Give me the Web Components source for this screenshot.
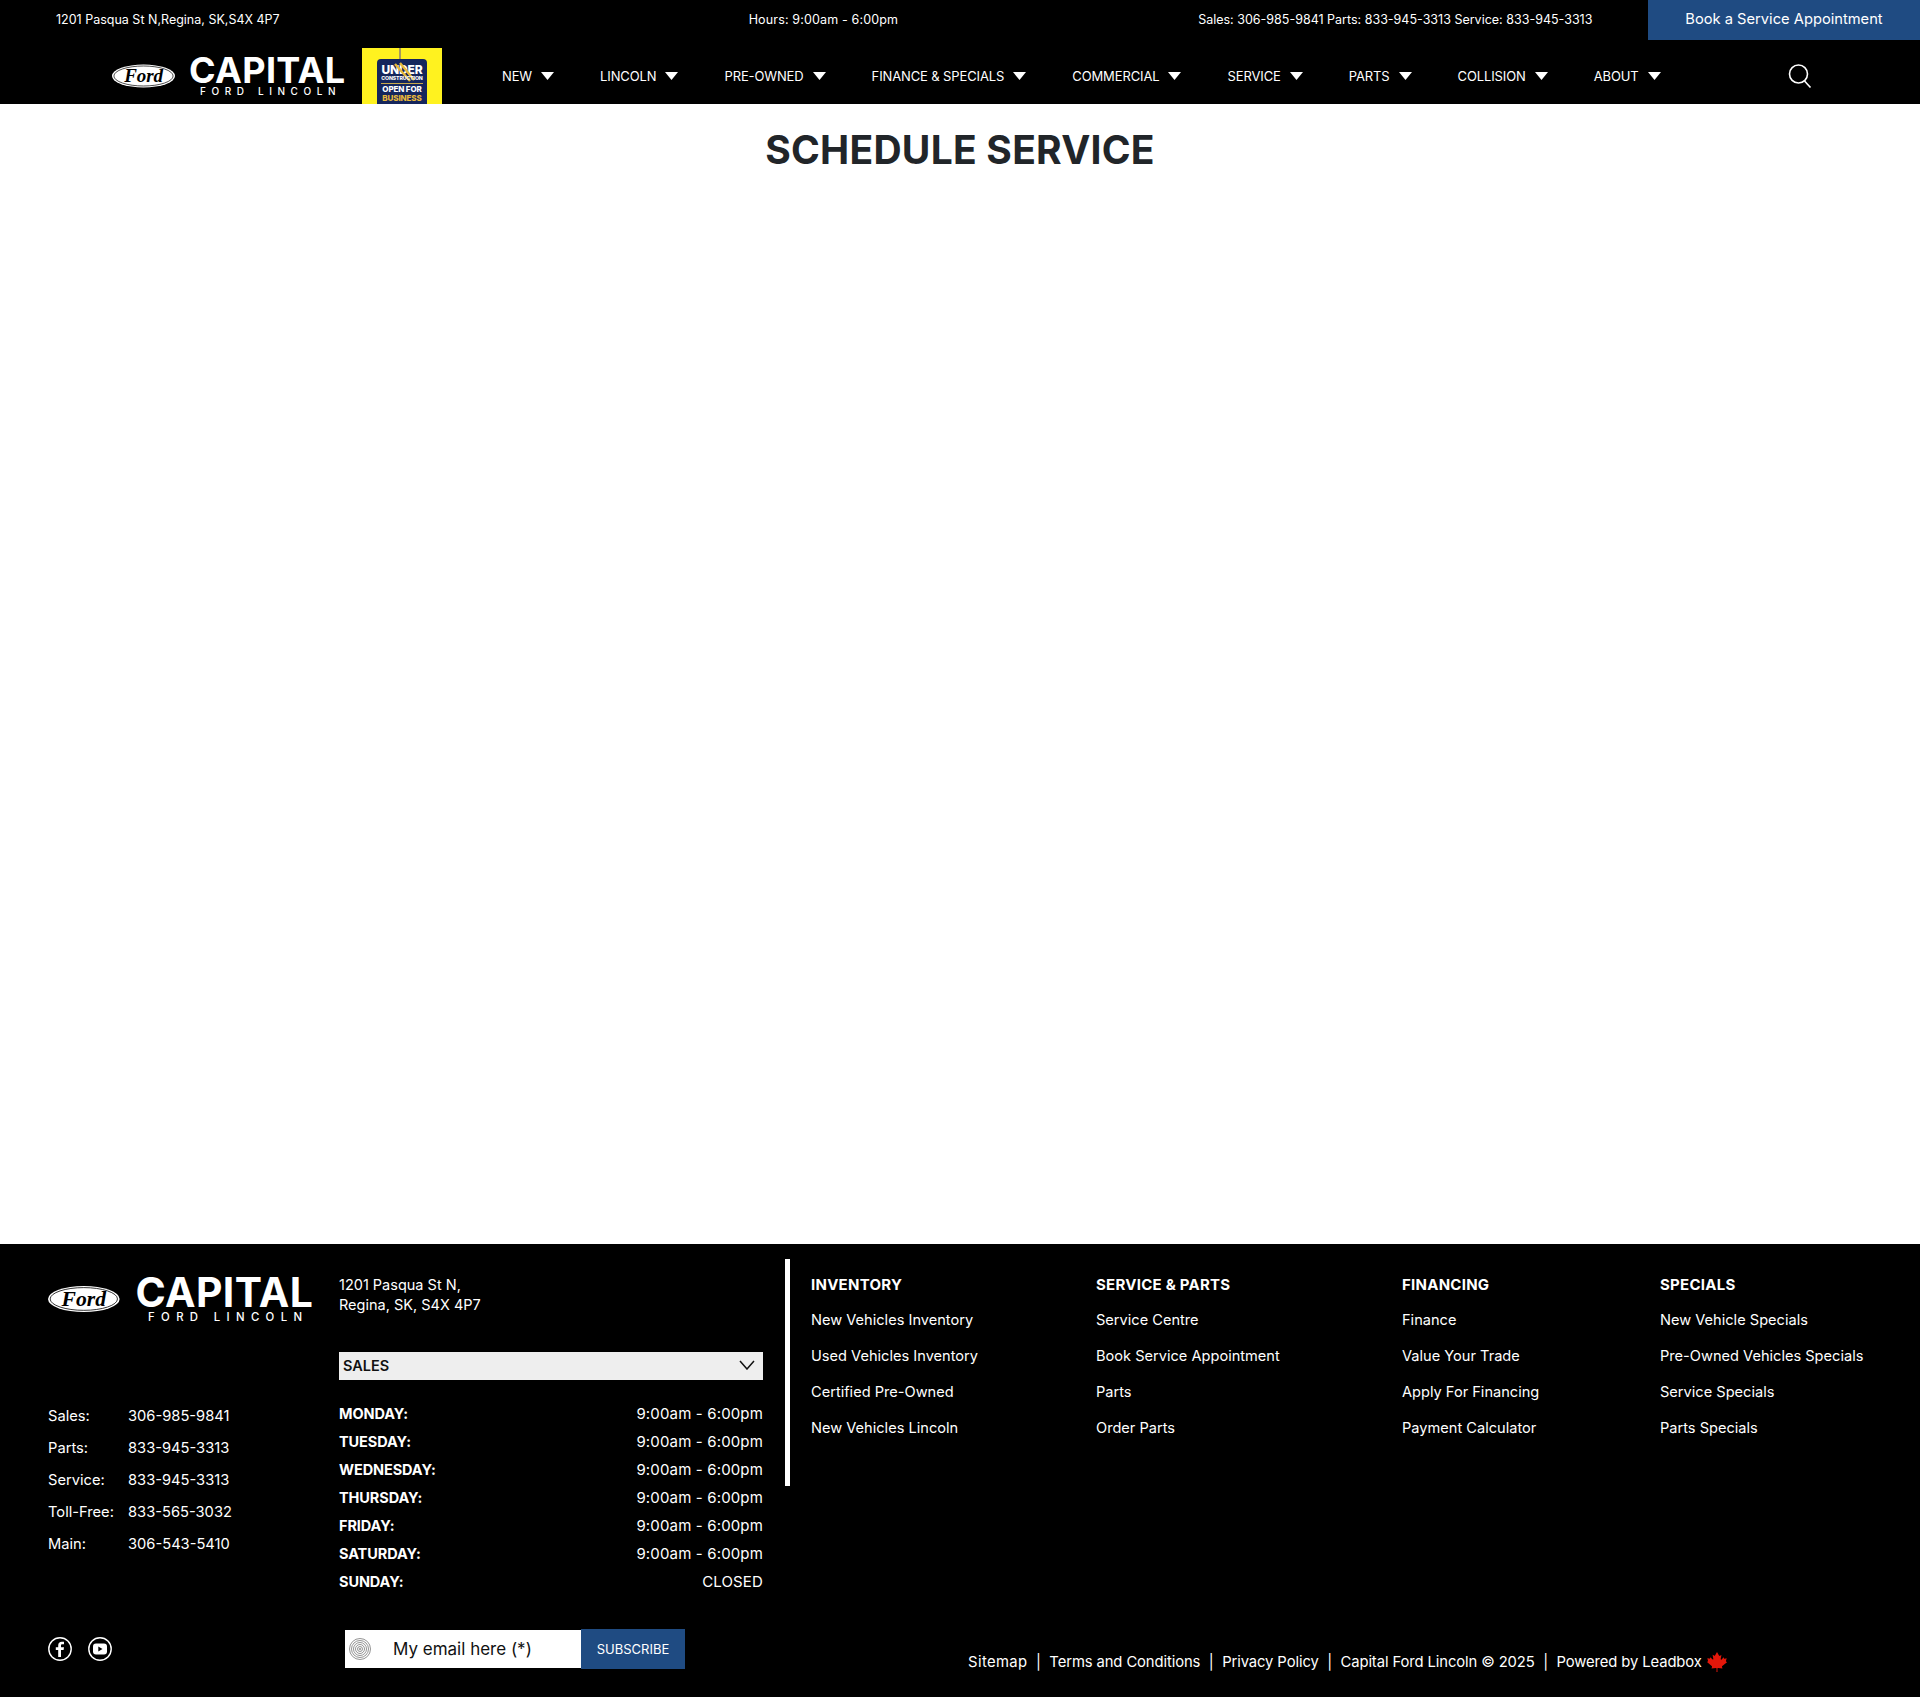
<!DOCTYPE html>
<html lang="en">
<head>
<meta charset="utf-8">
<title>Schedule Service</title>
<style>
    html, body { margin: 0; background: #fff; }
    body { font-family: Inter, "Liberation Sans", sans-serif; color: #fff; }
</style>
</head>
<body>
<top-bar></top-bar>
<main-nav></main-nav>
<page-heading>SCHEDULE SERVICE</page-heading>
<site-footer></site-footer>

<script>
const caret = `<svg width="13" height="8" viewBox="0 0 13 8"><path d="M0 0h13L6.5 8z" fill="#fff"/></svg>`;

class TopBar extends HTMLElement{
    constructor(){
        super();
        this.attachShadow({mode : 'open'});
    }
    connectedCallback(){
        this.shadowRoot.innerHTML = `
        <style>
            :host { display: block; background: #000; color: #fff; font-size: 12.5px; }
            .bar { display: flex; align-items: center; height: 38px; padding: 0 0 2px 56px; }
            .hours { margin-left: 469px; letter-spacing: .15px; }
            .phones { margin-left: 300px; width: 395px; white-space: nowrap; }
            .book { margin: 0 0 -2px auto; align-self: stretch; width: 272px; display: flex; align-items: center;
                    justify-content: center; background: #1f4b82; font-size: 14.7px; padding-bottom: 2px; box-sizing: border-box; }
        </style>
        <div class="bar">
            <span class="addr">1201 Pasqua St N,Regina, SK,S4X 4P7</span>
            <span class="hours">Hours: 9:00am - 6:00pm</span>
            <span class="phones">Sales: 306-985-9841 Parts: 833-945-3313 Service: 833-945-3313</span>
            <span class="book">Book a Service Appointment</span>
        </div>`;
    }
}

class BrandLogo extends HTMLElement{
    constructor(){
        super();
        this.attachShadow({mode : 'open'});
    }
    connectedCallback(){
        // viewBox runs past the 38 unit logo so the text boxes stay inside the svg
        this.shadowRoot.innerHTML = `
        <style>
            :host { display: block; width: var(--logo-width, 234px); flex: none; }
            svg { display: block; width: 100%; height: auto;
                  margin-top: calc(var(--logo-width, 234px) * -10 / 234);
                  margin-bottom: calc(var(--logo-width, 234px) * -4 / 234); }
        </style>
        <svg viewBox="0 -10 234 52" fill="#fff" font-family="Inter, sans-serif">
            <ellipse cx="31.5" cy="19" rx="31.5" ry="11.500"/>
            <ellipse cx="31.5" cy="19" rx="29.6" ry="10" fill="none" stroke="#000" stroke-width=".7"/>
            <text x="31.5" y="25" text-anchor="middle" font-family="Liberation Serif" font-style="italic" font-weight="700" font-size="19" fill="#000">Ford</text>
            <text x="77" y="26" font-size="36" font-weight="700" textLength="156" lengthAdjust="spacing">CAPITAL</text>
            <text x="88" y="38" font-size="10" font-weight="500" textLength="135.500" lengthAdjust="spacing">FORD LINCOLN</text>
        </svg>`;
    }
}

class NavItem extends HTMLElement{
    constructor(){
        super();
        this.attachShadow({mode : 'open'});
    }
    connectedCallback(){
        this.shadowRoot.innerHTML = `
        <style>
            :host { display: flex; align-items: center; gap: 9px; white-space: nowrap; }
        </style>
        <slot></slot>${caret}`;
    }
}

class MainNav extends HTMLElement{
    constructor(){
        super();
        this.attachShadow({mode : 'open'});
        this.items = ["NEW", "LINCOLN", "PRE-OWNED", "FINANCE & SPECIALS", "COMMERCIAL", "SERVICE", "PARTS", "COLLISION", "ABOUT"];
    }
    connectedCallback(){
        this.shadowRoot.innerHTML = `
        <style>
            :host { display: block; background: #000; color: #fff; font-size: 13px; letter-spacing: -0.12px; }
            .nav { display: flex; align-items: center; height: 64px; box-sizing: border-box; padding: 7px 0 0 112px; }
            brand-logo { align-self: flex-start; margin-top: 10px; }
            .badge { flex: none; width: 80px; height: 56px; align-self: flex-end; margin-left: 16px; display: block; }
            .links { display: flex; gap: 46px; margin-left: 60px; }
            .search { margin-left: auto; margin-right: 108px; display: block; }
        </style>
        <div class="nav">
            <brand-logo></brand-logo>
            <svg class="badge" viewBox="0 0 80 56" font-family="Inter, sans-serif" font-weight="800" text-anchor="middle">
                <rect width="80" height="56" fill="#fff21f"/>
                <path d="M38 0v11" stroke="#a89a5a" stroke-width="2"/>
                <rect x="15" y="11" width="50" height="50" rx="4" fill="#15265c"/>
                <text x="40" y="26" font-size="12" fill="#fff">UNDER</text>
                <path d="M33 16l15 17M38 15l14 17" stroke="#e5b93a" stroke-width="2.4"/>
                <text x="40" y="31.5" font-size="5.2" fill="#fff">CONSTRUCTION</text>
                <rect x="19" y="35" width="42" height="1" fill="#c9a94a"/>
                <text x="40" y="44" font-size="8" fill="#fff">OPEN FOR</text>
                <text x="40" y="52.500" font-size="8" fill="#e9b83a">BUSINESS</text>
            </svg>
            <div class="links"></div>
            <svg class="search" width="24" height="24" viewBox="0 0 24 24" fill="none" stroke="#fff" stroke-width="1.6">
                <circle cx="10.500" cy="10" r="9"/><path d="M16.500 17l6 6.500"/>
            </svg>
        </div>`;
        const links = this.shadowRoot.querySelector('.links');
        this.items.forEach(item => {
            const el = document.createElement('nav-item');
            el.textContent = item;
            links.appendChild(el);
        });
    }
}

class PageHeading extends HTMLElement{
    constructor(){
        super();
        this.attachShadow({mode : 'open'});
    }
    connectedCallback(){
        this.shadowRoot.innerHTML = `
        <style>
            :host { display: block; height: 1140px; background: #fff; color: #212529; text-align: center; }
            h1 { margin: 0; padding-top: 23px; font-size: 39px; line-height: 46px; font-weight: 700; letter-spacing: .25px; }
        </style>
        <h1><slot></slot></h1>`;
    }
}

class LinkColumn extends HTMLElement{
    constructor(){
        super();
        this.attachShadow({mode : 'open'});
    }
    connectedCallback(){
        const links = this.getAttribute('links').split('|');
        this.shadowRoot.innerHTML = `
        <style>
            :host { display: block; font-size: 14.6px; }
            h4 { margin: 0 0 4px; font-size: 15px; font-weight: 700; line-height: 26px; letter-spacing: .25px; }
            div { line-height: 36px; white-space: nowrap; }
        </style>
        <h4>${this.getAttribute('title')}</h4>
        ${links.map(l => `<div>${l}</div>`).join('')}`;
    }
}

class HoursPanel extends HTMLElement{
    constructor(){
        super();
        this.attachShadow({mode : 'open'});
        this.days = ["MONDAY", "TUESDAY", "WEDNESDAY", "THURSDAY", "FRIDAY", "SATURDAY", "SUNDAY"];
    }
    connectedCallback(){
        this.shadowRoot.innerHTML = `
        <style>
            :host { display: block; font-size: 15px; letter-spacing: .15px; }
            .select { display: flex; align-items: center; justify-content: space-between; height: 28px; box-sizing: border-box; padding: 0 8px 2px 4px;
                      background: #eee; color: #111; font-weight: 600; font-size: 14.5px; letter-spacing: 0; }
            .rows { margin-top: 20px; }
            .row { display: flex; justify-content: space-between; height: 28px; line-height: 28px; }
            b { font-weight: 700; font-size: 14.5px; letter-spacing: -0.1px; }
        </style>
        <div class="select"><span>SALES</span>
            <svg width="16" height="10" viewBox="0 0 16 10" fill="none" stroke="#111" stroke-width="1.5"><path d="M1 1l7 8 7-8"/></svg>
        </div>
        <div class="rows">
            ${this.days.map(d => `<div class="row"><b>${d}:</b><span>${d == "SUNDAY" ? "CLOSED" : "9:00am - 6:00pm"}</span></div>`).join('')}
        </div>`;
    }
}

class SubscribeForm extends HTMLElement{
    constructor(){
        super();
        this.attachShadow({mode : 'open'});
    }
    connectedCallback(){
        this.shadowRoot.innerHTML = `
        <style>
            :host { display: flex; align-items: stretch; height: 40px; margin-left: 6px; width: 340px; }
            .email { display: flex; align-items: center; width: 236px; margin: 1px 0; background: #fff; color: #111; font-size: 17px; }
            svg { margin: 0 22px 0 4px; flex: none; }
            .go { display: flex; align-items: center; justify-content: center; flex: 1; background: #1f4b82; color: #fff; font-size: 13px; }
        </style>
        <div class="email">
            <svg width="22" height="22" viewBox="0 0 22 22" fill="none" stroke="#777" stroke-width=".8">
                <circle cx="11" cy="11" r="10.500"/><circle cx="11" cy="11" r="8.500"/><circle cx="11" cy="11" r="6.500"/>
                <circle cx="11" cy="11" r="4.500"/><circle cx="11" cy="11" r="2.500"/><circle cx="11" cy="11" r=".8"/>
            </svg>
            <span>My email here (*)</span>
        </div>
        <div class="go">SUBSCRIBE</div>`;
    }
}

class SiteFooter extends HTMLElement{
    constructor(){
        super();
        this.attachShadow({mode : 'open'});
        this.phones = [["Sales:", "306-985-9841"], ["Parts:", "833-945-3313"], ["Service:", "833-945-3313"], ["Toll-Free:", "833-565-3032"], ["Main:", "306-543-5410"]];
    }
    connectedCallback(){
        this.shadowRoot.innerHTML = `
        <style>
            :host { display: block; background: #000; color: #fff; height: 453px; font-size: 14.7px; --logo-width: 266px; }
            .top { display: grid; grid-template-columns: 291px 424px 1fr; padding: 15px 0 0 48px; height: 385px; box-sizing: border-box; }
            .left brand-logo { margin-top: 18px; }
            .phones { margin-top: 80px; display: grid; grid-template-columns: 80px 1fr; grid-auto-rows: 32px; align-items: center; }
            .addr { line-height: 20px; padding-top: 16px; height: 77px; font-size: 14.5px; box-sizing: content-box; }
            .cols { align-self: start; margin-left: 22px; height: 227px; box-sizing: border-box; border-left: 5px solid #fff;
                    padding: 13px 0 0 21px; display: flex; }
            .cols link-column:nth-child(1) { width: 285px; }
            .cols link-column:nth-child(2) { width: 306px; }
            .cols link-column:nth-child(3) { width: 258px; }
            .bottom { display: grid; grid-template-columns: 291px 424px 1fr; padding-left: 48px; }
            .social { display: flex; gap: 16px; align-items: center; height: 40px; }
            .legal { padding: 26px 0 0 205px; white-space: nowrap; font-size: 14.8px; display: flex; align-items: center; height: 40px; box-sizing: border-box; letter-spacing: -0.1px; }
            .legal span:first-child { letter-spacing: .4px; }
            .legal i { font-style: normal; margin: 0 8.5px; }
            .legal svg { margin-left: 5px; }
        </style>
        <div class="top">
            <div class="left">
                <brand-logo></brand-logo>
                <div class="phones">${this.phones.map(p => `<span>${p[0]}</span><span>${p[1]}</span>`).join('')}</div>
            </div>
            <div class="mid">
                <div class="addr">1201 Pasqua St N,<br>Regina, SK, S4X 4P7</div>
                <hours-panel></hours-panel>
            </div>
            <div class="cols">
                <link-column title="INVENTORY" links="New Vehicles Inventory|Used Vehicles Inventory|Certified Pre-Owned|New Vehicles Lincoln"></link-column>
                <link-column title="SERVICE &amp; PARTS" links="Service Centre|Book Service Appointment|Parts|Order Parts"></link-column>
                <link-column title="FINANCING" links="Finance|Value Your Trade|Apply For Financing|Payment Calculator"></link-column>
                <link-column title="SPECIALS" links="New Vehicle Specials|Pre-Owned Vehicles Specials|Service Specials|Parts Specials"></link-column>
            </div>
        </div>
        <div class="bottom">
            <div class="social">
                <svg width="24" height="24" viewBox="0 0 24 24">
                    <circle cx="12" cy="12" r="11.200" fill="none" stroke="#fff" stroke-width="1.400"/>
                    <path d="M13 20v-7h2.600l.4-2.800h-3V8.600c0-.8.300-1.300 1.400-1.300H16V4.800c-.3 0-1.200-.1-2.200-.1-2.200 0-3.600 1.300-3.600 3.700v1.800H7.800V13h2.400v7z" fill="#fff"/>
                </svg>
                <svg width="24" height="24" viewBox="0 0 24 24">
                    <circle cx="12" cy="12" r="11.200" fill="none" stroke="#fff" stroke-width="1.400"/>
                    <rect x="5" y="6.500" width="14" height="11" rx="3" fill="#fff"/>
                    <path d="M10.300 9.500v5l4.200-2.500z" fill="#000"/>
                </svg>
            </div>
            <subscribe-form></subscribe-form>
            <div class="legal">
                <span>Sitemap</span><i>|</i><span>Terms and Conditions</span><i>|</i><span>Privacy Policy</span><i>|</i><span>Capital Ford Lincoln © 2025</span><i>|</i><span>Powered by Leadbox</span>
                <svg width="20" height="20" viewBox="0 0 20 20"><path fill="#e3170a" d="M10 0l2 3.600c.2.400.6.300 1 .1l1.400-.8-.7 4c-.1.800.4 1 .9.500l2-2.100.5 1.200c.1.300.3.300.6.200l2-.4-.7 2.500c-.1.500-.1.700.3.900l.8.400-4.800 3.900c-.3.300-.4.500-.3.900l.5 1.500-4.500-.5c-.4 0-.6.200-.6.500l.1 3.600h-1l.1-3.600c0-.3-.2-.5-.6-.500l-4.500.5.500-1.500c.1-.4 0-.6-.3-.9L-.1 10l.8-.4c.4-.2.400-.4.300-.9L.3 6.200l2 .4c.3.100.5.100.6-.2l.5-1.200 2 2.100c.5.500 1 .3.900-.5l-.7-4 1.400.8c.4.200.8.300 1-.1z"/></svg>
            </div>
        </div>`;
    }
}

window.customElements.define('top-bar', TopBar);
window.customElements.define('brand-logo', BrandLogo);
window.customElements.define('nav-item', NavItem);
window.customElements.define('main-nav', MainNav);
window.customElements.define('page-heading', PageHeading);
window.customElements.define('link-column', LinkColumn);
window.customElements.define('hours-panel', HoursPanel);
window.customElements.define('subscribe-form', SubscribeForm);
window.customElements.define('site-footer', SiteFooter);
</script>
</body>
</html>
